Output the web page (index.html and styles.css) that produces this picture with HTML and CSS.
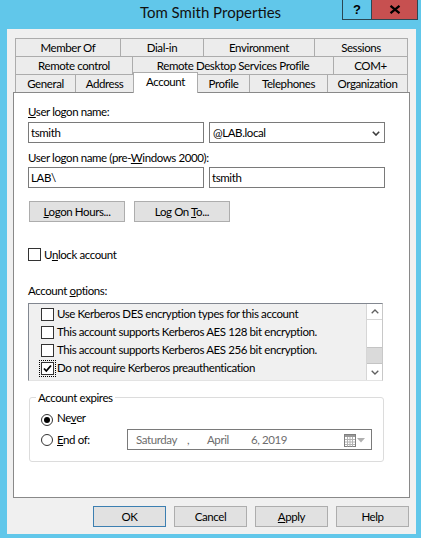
FILE: index.html
```html
<!DOCTYPE html>
<html>
<head>
<meta charset="utf-8">
<title>Tom Smith Properties</title>
<link rel="stylesheet" href="styles.css">
</head>
<body>
<div class="window">
  <div class="titlebar">
    <div></div>
    <div class="title">Tom Smith Properties</div>
    <div class="caption-btns">
      <div class="cb cb-help">?</div>
      <div class="cb cb-close">
        <svg width="12" height="9" viewBox="0 0 12 9"><path d="M1.5 0.8 L10.5 8.2 M10.5 0.8 L1.5 8.2" stroke="#000" stroke-width="2.2" fill="none"/></svg>
      </div>
    </div>
  </div>
  <div class="client">
    <div class="tabs">
      <div class="tabrow">
        <div class="tab t-member">Member Of</div>
        <div class="tab t-dial">Dial-in</div>
        <div class="tab t-env">Environment</div>
        <div class="tab t-sess last">Sessions</div>
      </div>
      <div class="tabrow">
        <div class="tab t-remote">Remote control</div>
        <div class="tab t-rds">Remote Desktop Services Profile</div>
        <div class="tab t-com last">COM+</div>
      </div>
      <div class="tabrow">
        <div class="tab t-general">General</div>
        <div class="tab t-address">Address</div>
        <div class="tab t-account selected">Account</div>
        <div class="tab t-profile">Profile</div>
        <div class="tab t-tel">Telephones</div>
        <div class="tab t-org last">Organization</div>
      </div>
    </div>
    <div class="panel">
      <div class="lbl lbl-logon"><u>U</u>ser logon name:</div>
      <div class="fields fields-1">
        <div class="field">tsmith</div>
        <div class="field select">@LAB.local
          <svg class="sel-chev" width="8" height="5" viewBox="0 0 8 5"><path d="M0.8 0.8 L4 4 L7.2 0.8" stroke="#3c3c3c" stroke-width="1.6" fill="none"/></svg>
        </div>
      </div>
      <div class="lbl lbl-pre">User logon name (pre-<u>W</u>indows 2000):</div>
      <div class="fields fields-2">
        <div class="field">LAB\</div>
        <div class="field">tsmith</div>
      </div>
      <div class="btn-row">
        <div class="btn"><u>L</u>ogon Hours...</div>
        <div class="btn">Log On <u>T</u>o...</div>
      </div>
      <div class="unlock">
        <span class="cbx"></span>
        <span class="unlock-text">U<u>n</u>lock account</span>
      </div>
      <div class="lbl lbl-opts">Account <u>o</u>ptions:</div>
      <div class="listbox">
        <div class="items">
          <div class="item"><span class="cbx"></span><span>Use Kerberos DES encryption types for this account</span></div>
          <div class="item"><span class="cbx"></span><span>This account supports Kerberos AES 128 bit encryption.</span></div>
          <div class="item"><span class="cbx"></span><span>This account supports Kerberos AES 256 bit encryption.</span></div>
          <div class="item"><span class="cbx checked focus"><svg width="11" height="11" viewBox="0 0 11 11"><path d="M2 5.5 L4.3 8 L9 2.5" stroke="#000" stroke-width="1.8" fill="none"/></svg></span><span>Do not require Kerberos preauthentication</span></div>
        </div>
        <div class="scrollbar">
          <div class="sb-btn sb-up"><svg width="8" height="5" viewBox="0 0 8 5"><path d="M0.7 4.3 L4 1 L7.3 4.3" stroke="#606060" stroke-width="1.3" fill="none"/></svg></div>
          <div class="sb-track"></div>
          <div class="sb-thumb"></div>
          <div class="sb-btn sb-down"><svg width="8" height="5" viewBox="0 0 8 5"><path d="M0.7 0.7 L4 4 L7.3 0.7" stroke="#606060" stroke-width="1.3" fill="none"/></svg></div>
        </div>
      </div>
      <fieldset class="expires">
        <legend>Account expires</legend>
        <div class="radio-row never">
          <span class="radio on"><span class="dot"></span></span>
          <span class="radio-text">Ne<u>v</u>er</span>
        </div>
        <div class="radio-row endof">
          <div class="endof-left">
            <span class="radio"></span>
            <span class="radio-text"><u>E</u>nd of:</span>
          </div>
          <div class="datepicker">
            <span class="dp-day">Saturday</span>
            <span class="dp-comma">,</span>
            <span class="dp-month">April</span>
            <span class="dp-year">6, 2019</span>
            <svg class="dp-cal" width="12" height="13" viewBox="0 0 12 13">
              <rect x="0.5" y="0.5" width="11" height="12" fill="#fff" stroke="#7f7f7f"/>
              <rect x="1" y="1" width="10" height="2" fill="#9a9a9a"/>
              <path d="M1 5.5 H11 M1 8 H11 M1 10.5 H11 M3.5 3 V12.5 M6 3 V12.5 M8.5 3 V12.5" stroke="#b4b4b4" stroke-width="1" fill="none"/>
            </svg>
            <svg class="dp-arrow" width="8" height="5" viewBox="0 0 8 5"><path d="M0 0 H8 L4 4.5 Z" fill="#b0b0b0"/></svg>
          </div>
        </div>
      </fieldset>
    </div>
    <div class="dlg-buttons">
      <div class="btn dlg default">OK</div>
      <div class="btn dlg">Cancel</div>
      <div class="btn dlg"><u>A</u>pply</div>
      <div class="btn dlg">Help</div>
    </div>
  </div>
</div>
</body>
</html>
```

FILE: styles.css
```css
* { box-sizing: border-box; }
html, body { margin: 0; padding: 0; }
body {
  width: 421px;
  height: 538px;
  overflow: hidden;
  background: #61c7ea;
  font-family: Lato, "Liberation Sans", sans-serif;
  font-size: 11.5px;
  letter-spacing: -0.4px;
  color: #000;
}
u { text-decoration: underline; text-underline-offset: 1px; }

.window {
  width: 421px;
  height: 538px;
  display: flex;
  flex-direction: column;
}

/* title bar */
.titlebar {
  height: 29px;
  display: grid;
  grid-template-columns: 1fr auto 1fr;
}
.title {
  font-size: 15px;
  letter-spacing: 0;
  line-height: 20px;
  padding-top: 2px;
  color: #111;
  white-space: nowrap;
}
.caption-btns {
  justify-self: end;
  align-self: start;
  display: flex;
  margin-right: 3px;
}
.cb {
  height: 20px;
  border: 1px solid #2a4753;
  border-top: none;
  display: flex;
  align-items: center;
  justify-content: center;
}
.cb-help {
  width: 29px;
  border-right: none;
  font-weight: bold;
  font-size: 13px;
  letter-spacing: 0;
  font-family: "Liberation Sans", sans-serif;
}
.cb-close {
  width: 47px;
  background: #c75050;
}

/* client area */
.client {
  margin: 0 5px 4px 7px;
  height: 505px;
  background: #f0f0f0;
  padding: 9px 6px 0 6px;
  display: flex;
  flex-direction: column;
}

/* tabs */
.tabs { margin: 0 2px; }
.tabrow { display: flex; height: 18px; }
.tab {
  height: 18px;
  border: 1px solid #acacac;
  border-bottom: none;
  border-right: none;
  background: #ececec;
  text-align: center;
  line-height: 17px;
  white-space: nowrap;
  overflow: hidden;
}
.tab.last { border-right: 1px solid #acacac; }
.t-member { width: 105px; }
.t-dial { width: 83px; }
.t-env { width: 111px; }
.t-sess { width: 94px; }
.t-remote { width: 117px; }
.t-rds { width: 201px; }
.t-com { width: 75px; }
.t-general { width: 60px; }
.t-address { width: 58px; }
.t-account { width: 65px; }
.t-profile { width: 51px; }
.t-tel { width: 78px; }
.t-org { width: 81px; }
.tab.selected {
  background: #fff;
  border-right: 1px solid #acacac;
  height: 21px;
  margin-top: -2px;
  position: relative;
  z-index: 2;
}
.tab.selected + .tab { border-left: none; }

/* panel */
.panel {
  height: 406px;
  background: #fff;
  border: 1px solid #898989;
  padding: 0 0 0 14px;
}
.lbl { line-height: 15px; height: 15px; white-space: nowrap; }
.lbl-logon { margin-top: 11px; }
.fields { display: flex; gap: 5px; }
.fields-1 { margin-top: 3px; }
.lbl-pre { margin-top: 7px; }
.fields-2 { margin-top: 2px; }
.field {
  width: 176px;
  height: 21px;
  border: 1px solid #7a7a7a;
  padding: 2px 2px 0 2px;
  line-height: 15px;
  white-space: nowrap;
}
.select {
  display: flex;
  align-items: flex-start;
  justify-content: space-between;
  padding-left: 3px;
  padding-right: 4px;
}
.sel-chev { margin-top: 6px; }

.btn-row {
  display: flex;
  gap: 9px;
  margin-top: 13px;
  margin-left: 1px;
}
.btn {
  width: 96px;
  height: 21px;
  border: 1px solid #adadad;
  background: #e1e1e1;
  text-align: center;
  line-height: 19px;
  white-space: nowrap;
}

.unlock {
  display: flex;
  align-items: center;
  gap: 3px;
  height: 13px;
  margin-top: 26px;
}
.unlock-text { line-height: 13px; }
.cbx {
  width: 13px;
  height: 13px;
  border: 1px solid #333;
  background: #fff;
  flex: none;
  display: flex;
  align-items: center;
  justify-content: center;
}
.cbx.focus { outline: 1px dotted #000; outline-offset: 1px; }

.lbl-opts { margin-top: 22px; }

.listbox {
  margin-top: 5px;
  width: 355px;
  height: 78px;
  border: 1px solid #828790;
  border-right-color: #c8c8c8;
  border-bottom-color: #e3e3e3;
  background: #f0f0f0;
  display: flex;
}
.items {
  flex: 1;
  padding: 1px 0 0 12px;
}
.item {
  height: 18px;
  display: flex;
  align-items: center;
  gap: 3px;
  line-height: 18px;
  white-space: nowrap;
}
.scrollbar {
  width: 16px;
  display: flex;
  flex-direction: column;
  background: #fff;
  border-left: 1px solid #d6d6d6;
}
.sb-btn {
  height: 16px;
  display: flex;
  align-items: center;
  justify-content: center;
  border-bottom: 1px solid #d6d6d6;
  background: #fff;
}
.sb-down { height: 17px; border-bottom: none; border-top: 1px solid #c4c4c4; }
.sb-track { height: 27px; }
.sb-thumb {
  height: 16px;
  background: #dadada;
  border-top: 1px solid #c4c4c4;
}

/* group box */
.expires {
  margin: 9px 0 0 1px;
  width: 355px;
  height: 72px;
  border: 1px solid #dcdcdc;
  border-radius: 3px;
  padding: 0 0 0 11px;
}
.expires legend {
  margin-left: -5px;
  padding: 0 2px;
  line-height: 15px;
}
.radio-row { display: flex; }
.never {
  margin-top: 9px;
  align-items: flex-start;
  gap: 4px;
}
.radio-text { white-space: nowrap; }
.never .radio-text { line-height: 12px; margin-top: -2px; }
.radio {
  width: 12px;
  height: 12px;
  border: 1px solid #333;
  border-radius: 50%;
  background: #fff;
  display: flex;
  align-items: center;
  justify-content: center;
  flex: none;
}
.dot { width: 6px; height: 6px; border-radius: 50%; background: #000; }
.endof { margin-top: 3px; }
.endof-left {
  width: 86px;
  display: flex;
  align-items: center;
  gap: 4px;
}
.endof-left .radio-text { line-height: 19px; }
.datepicker {
  width: 245px;
  height: 21px;
  border: 1px solid #7a7a7a;
  display: flex;
  align-items: flex-start;
  padding-left: 8px;
  color: #6d6d6d;
  line-height: 17px;
  padding-top: 1px;
}
.dp-day { width: 51px; }
.dp-comma { width: 20px; }
.dp-month { width: 44px; }
.dp-year { width: 93px; }
.dp-cal { margin-top: 3px; }
.dp-arrow { margin-top: 7px; margin-left: 1px; }

/* dialog buttons */
.dlg-buttons {
  display: flex;
  justify-content: flex-end;
  gap: 8px;
  margin-top: 8px;
  margin-right: 1px;
}
.btn.dlg { width: 73px; }
.btn.default { border-color: #3c7fb1; }
```
